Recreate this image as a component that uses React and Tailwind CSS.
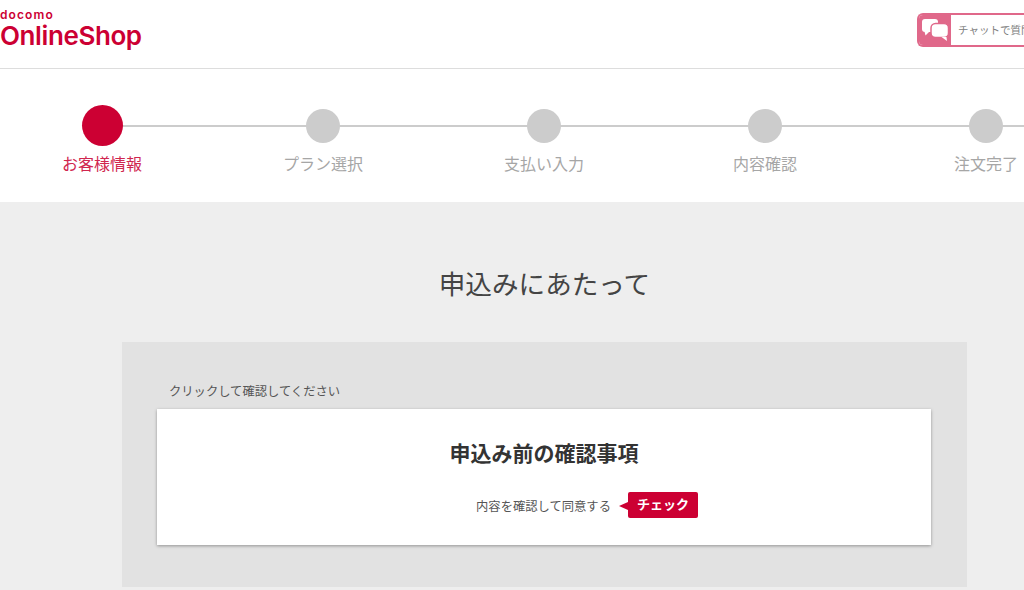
import React from "react";

const FONT = '"Liberation Sans", "Noto Sans CJK JP", sans-serif';

function Step({ label, active, first }) {
  return (
    <div className="w-[221px] shrink-0 flex flex-col items-center">
      <div className="relative h-[41px] w-full flex items-center justify-center">
        <div className={`absolute top-[20px] right-0 h-[2px] bg-[#cccccc] ${first ? "left-1/2" : "left-0"}`} />
        <div className={active ? "relative w-[41px] h-[41px] rounded-full bg-[#cc0033]" : "relative w-[34px] h-[34px] rounded-full bg-[#cccccc]"} />
      </div>
      <div className={`mt-[9px] text-[16px] leading-[20px] whitespace-nowrap ${active ? "text-[#d0264f]" : "text-[#a6a6a6]"}`}>{label}</div>
    </div>
  );
}

function ChatIcon() {
  return (
    <svg width="28" height="24" viewBox="0 0 28 24" fill="none">
      <rect x="1" y="1" width="16" height="13" rx="3" fill="#ffffff" />
      <path d="M3.5 13.5h5l-4 4z" fill="#ffffff" />
      <rect x="10" y="5.5" width="17.5" height="14" rx="4.5" fill="#ffffff" stroke="#e0688a" strokeWidth="1.5" />
      <path d="M20.5 19h5l.5 4z" fill="#ffffff" />
    </svg>
  );
}

export default function App() {
  return (
    <div className="w-[1024px] h-[590px] overflow-hidden bg-[#eeeeee]" style={{ fontFamily: FONT }}>
      <header className="h-[69px] bg-white border-b border-[#dddddd] flex items-start justify-between">
        <div className="pt-[9px] text-[#cc0033] font-semibold" style={{ fontFamily: '"Inter", "Liberation Sans", sans-serif' }}>
          <div className="text-[12px] leading-[12px] tracking-[1.1px]">docomo</div>
          <div className="mt-[1px] text-[26px] leading-[28px] tracking-[-0.4px]">OnlineShop</div>
        </div>
        <div className="mt-[13px] w-[107px] h-[34px] flex rounded-l-[6px] border-2 border-r-0 border-[#e0688a] bg-white overflow-hidden">
          <div className="w-[32px] shrink-0 bg-[#e0688a] flex items-center justify-center">
            <ChatIcon />
          </div>
          <div className="pl-[7px] text-[10.5px] leading-[30px] text-[#808080] whitespace-nowrap">チャットで質問</div>
        </div>
      </header>
      <nav className="h-[133px] bg-white pt-[36px] flex ml-[-8.5px] w-[1041px] overflow-hidden">
        <Step label="お客様情報" active first />
        <Step label="プラン選択" />
        <Step label="支払い入力" />
        <Step label="内容確認" />
        <Step label="注文完了" />
      </nav>
      <main className="pl-[65px] flex flex-col items-center">
        <h1 className="mt-[66px] text-[26.6px] leading-[34px] text-[#444444] font-normal">申込みにあたって</h1>
        <section className="mt-[40px] w-[845px] h-[245px] bg-[#e2e2e2] pt-[40px] pl-[35px] pr-[36px]">
          <p className="pl-[12px] text-[12.3px] leading-[20px] text-[#555555]">クリックして確認してください</p>
          <div className="mt-[7px] h-[136px] bg-white shadow-[0_1px_3px_rgba(0,0,0,0.35)] flex flex-col items-center">
            <h2 className="mt-[31px] text-[21px] leading-[28px] font-bold text-[#333333]">申込み前の確認事項</h2>
            <div className="mt-[24px] ml-[86px] flex items-start">
              <span className="pt-[2px] text-[12.3px] leading-[26px] text-[#555555]">内容を確認して同意する</span>
              <button className="relative ml-[17px] h-[26px] w-[70px] rounded-[2px] bg-[#cc0033] text-white text-[13px] font-bold leading-[24px] text-center">
                <span className="absolute left-[-9px] top-[10px] w-0 h-0 border-y-[4px] border-y-transparent border-r-[9px] border-r-[#cc0033]" />
                チェック
              </button>
            </div>
          </div>
        </section>
      </main>
    </div>
  );
}
